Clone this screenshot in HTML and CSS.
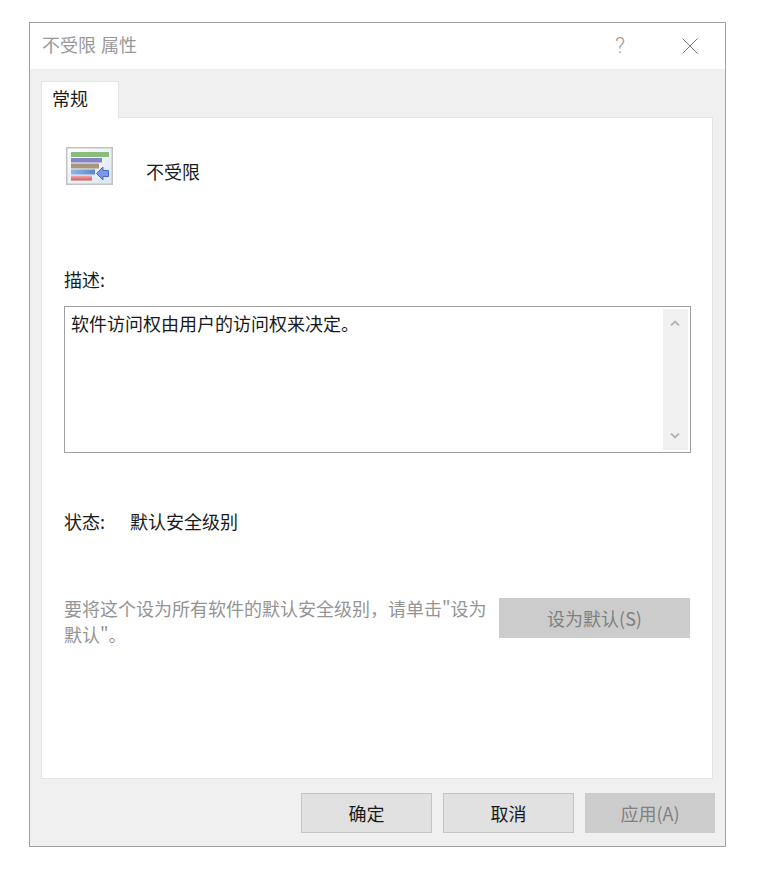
FILE: index.html
```html
<!DOCTYPE html>
<html lang="zh-CN">
<head>
  <meta charset="UTF-8">
  <title>不受限 属性</title>
  <link rel="stylesheet" href="styles.css">
</head>
<body>
  <div class="window">
    <!-- Title bar -->
    <div class="title-bar">
      <span class="title-text">不受限 属性</span>
      <span class="help-button">?</span>
      <svg class="close-button" width="16" height="16" viewBox="0 0 16 16">
        <path d="M0.5 0.5L15.5 15.5M15.5 0.5L0.5 15.5" stroke="#777" stroke-width="1" fill="none"/>
      </svg>
    </div>

    <div class="dialog-body">
      <div class="tab-strip">
        <div class="tab">常规</div>
      </div>

      <div class="tab-panel">
        <div class="policy-row">
          <svg class="policy-icon" width="47" height="38" viewBox="0 0 47 38">
            <defs>
              <linearGradient id="iconBg" x1="0" y1="0" x2="1" y2="1">
                <stop offset="0" stop-color="#ffffff"/>
                <stop offset="1" stop-color="#dbe5f2"/>
              </linearGradient>
              <linearGradient id="redBar" x1="0" y1="0" x2="0" y2="1">
                <stop offset="0" stop-color="#f2b0b0"/>
                <stop offset="1" stop-color="#d05a5a"/>
              </linearGradient>
              <linearGradient id="blueBar" x1="0" y1="0" x2="1" y2="0">
                <stop offset="0" stop-color="#8ab6f0"/>
                <stop offset="1" stop-color="#5d86c8"/>
              </linearGradient>
            </defs>
            <rect x="0.75" y="0.75" width="45.5" height="36.5" fill="url(#iconBg)" stroke="#c2c2c2" stroke-width="1.5"/>
            <rect x="5" y="5" width="38" height="5" fill="#8cbc7c"/>
            <rect x="5" y="11" width="31" height="4.5" fill="#8485c4"/>
            <rect x="5" y="16.5" width="28" height="5" fill="#a8977f"/>
            <rect x="5" y="22.5" width="24" height="5" fill="url(#blueBar)"/>
            <rect x="5" y="28.5" width="21" height="5" fill="url(#redBar)"/>
            <path d="M30.5 26.5L37 20V23.5H42.5V29.5H37V33Z" fill="#7d98ea" stroke="#4a68cc" stroke-width="1"/>
          </svg>
          <span class="policy-name">不受限</span>
        </div>

        <div class="field-label">描述:</div>
        <div class="description-box">
          <div class="description-text">软件访问权由用户的访问权来决定。</div>
          <div class="scrollbar">
            <svg width="10" height="6" viewBox="0 0 10 6"><path d="M1 5.5L5 1.5L9 5.5" stroke="#b4b4b4" stroke-width="1.8" fill="none"/></svg>
            <svg width="10" height="6" viewBox="0 0 10 6"><path d="M1 0.5L5 4.5L9 0.5" stroke="#b4b4b4" stroke-width="1.8" fill="none"/></svg>
          </div>
        </div>

        <div class="status-row">
          <span class="status-label">状态:</span>
          <span>默认安全级别</span>
        </div>

        <div class="default-row">
          <p class="default-hint">要将这个设为所有软件的默认安全级别，请单击"设为默认"。</p>
          <div class="button button-disabled default-button">设为默认(S)</div>
        </div>
      </div>

      <div class="dialog-buttons">
        <div class="button">确定</div>
        <div class="button">取消</div>
        <div class="button button-disabled apply-button">应用(A)</div>
      </div>
    </div>
  </div>
</body>
</html>
```

FILE: styles.css
```css
* {
  box-sizing: border-box;
  margin: 0;
  padding: 0;
}

body {
  background-color: white;
  color: #1a1a1a;
  font-family: "Noto Sans CJK SC", "Noto Sans", sans-serif;
  font-size: 18px;
  line-height: 24px;
  padding: 22px 0 0 29px;
  margin: 0;
}

.window {
  width: 697px;
  height: 825px;
  border: 1px solid #a0a0a0;
  display: flex;
  flex-direction: column;
  background-color: #f0f0f0;
}

.title-bar {
  height: 46px;
  flex: none;
  display: flex;
  align-items: center;
  background-color: white;
  padding: 0 0 4px 12px;
  color: #999;
}

.title-text {
  flex: 1;
  word-spacing: 1px;
}

.help-button {
  margin: 4px 57px 0 0;
  font-family: Roboto, "Liberation Sans", sans-serif;
  font-size: 22px;
  font-weight: 300;
  color: #a0a0a0;
}

.close-button {
  margin: 4px 27px 0 0;
}

.dialog-body {
  flex: 1;
  display: flex;
  flex-direction: column;
  padding: 12px 10px 13px 11px;
}

.tab-strip {
  display: flex;
  height: 36px;
  flex: none;
}

.tab {
  width: 78px;
  height: 37px;
  padding: 4px 0 0 10px;
  background-color: white;
  border: 1px solid #e3e3e3;
  border-bottom: none;
  position: relative;
  z-index: 1;
}

.tab-panel {
  height: 662px;
  width: 672px;
  flex: none;
  background-color: white;
  border: 1px solid #e3e3e3;
  padding: 29px 21px 0 22px;
}

.policy-row {
  display: flex;
  align-items: center;
  height: 38px;
  padding-left: 2px;
}

.policy-name {
  margin-left: 33px;
  position: relative;
  top: 5px;
}

.field-label {
  margin-top: 82px;
}

.description-box {
  margin-top: 15px;
  height: 147px;
  border: 1px solid #a0a0a0;
  display: flex;
  padding: 2px;
}

.description-text {
  flex: 1;
  padding: 2px 4px;
}

.scrollbar {
  width: 25px;
  background-color: #f0f0f0;
  display: flex;
  flex-direction: column;
  justify-content: space-between;
  align-items: center;
  padding: 11px 2px 11px 0;
}

.status-row {
  margin-top: 56px;
  display: flex;
}

.status-label {
  width: 66px;
}

.default-row {
  margin: 65px 1px 0 0;
  display: flex;
  align-items: flex-start;
}

.default-hint {
  width: 434px;
  color: #949494;
  line-height: 26px;
  margin: -3px 1px 0 0;
}

.button {
  width: 131px;
  height: 40px;
  display: flex;
  align-items: center;
  justify-content: center;
  background-color: #e1e1e1;
  border: 1px solid #c4c4c4;
}

.button-disabled {
  background-color: #cccccc;
  border-color: #cccccc;
  color: #808080;
}

.default-button {
  width: 191px;
}

.dialog-buttons {
  display: flex;
  justify-content: flex-end;
  gap: 11px;
  margin-top: 14px;
}

.apply-button {
  width: 130px;
}
```
